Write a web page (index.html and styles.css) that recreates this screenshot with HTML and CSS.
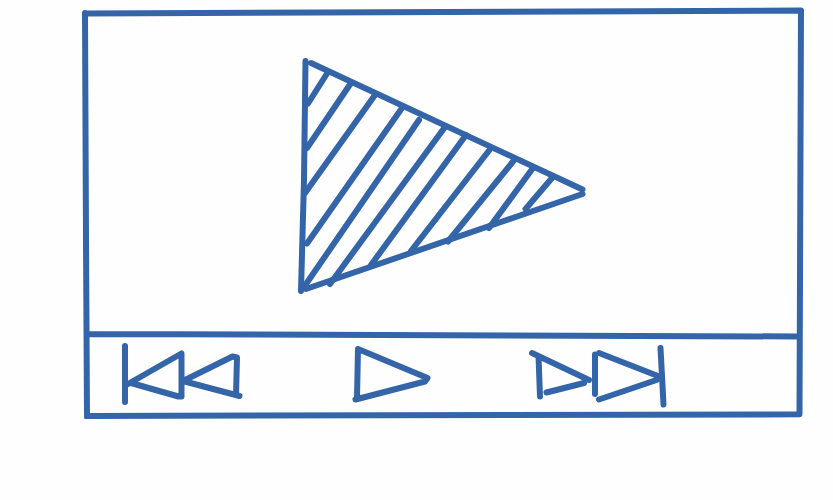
FILE: index.html
```html
<!DOCTYPE html>
<html lang="en">
<head>
<meta charset="utf-8">
<meta name="viewport" content="width=device-width, initial-scale=1">
<title>Video player</title>
<link rel="stylesheet" href="styles.css">
</head>
<body>
<main class="player">
  <!-- Hand-drawn outline that stretches with the player -->
  <svg class="frame" viewBox="82 7 722 412" preserveAspectRatio="none" aria-hidden="true">
    <path d="M85 13V13.500L801 10.500M801 10.500L799.500 413M799.500 414.300L87 416M87 417L86 240L85 13M88 334L798 336.500"/>
  </svg>
  <section class="screen">
    <button class="button" type="button" aria-label="Play video">
      <svg width="292" height="248" viewBox="297 47 292 248" aria-hidden="true">
        <path d="M305.500 61L304 180L301 291M311 63L582.500 189.500M582.500 194L306 289"/>
        <path d="M328 72L308 103.500M351 83L307 148M375 95L305 193M402 108L307 243.500M419 120L304 287M445 127L330 284M466 135L371 265M491 148L411 251M515 159L448 241.500M533 168L489 228M552 178L525.500 209"/>
      </svg>
    </button>
  </section>
  <nav class="controls" aria-label="Playback">
    <button class="button" type="button" aria-label="Previous">
      <svg width="134" height="68" viewBox="122 343 134 68" aria-hidden="true">
        <path d="M125 346V402M128 384L181.500 353.500L181.500 396.500L178.500 396.500L131 383M236 395L237 357.500L232.500 356.500L183 381L239.500 396"/>
      </svg>
    </button>
    <button class="button" type="button" aria-label="Play">
      <svg width="78" height="68" viewBox="353 343 78 68" aria-hidden="true">
        <path d="M357 398L358 349L427.500 378L425 381.500L355.500 399.500"/>
      </svg>
    </button>
    <button class="button" type="button" aria-label="Next">
      <svg width="139" height="68" viewBox="528 343 139 68" aria-hidden="true">
        <path d="M532 353L589 380M538.500 356L540 396.500M546.500 392.500L584 383M595 354.500L595 394M599 353L658 376M656.500 380L599 399.500M660.500 348L663.500 404.500"/>
      </svg>
    </button>
  </nav>
</main>
</body>
</html>
```
FILE: styles.css
```css
body {
  margin: 0;
  background: #fefefe;
  font-family: "Liberation Sans", sans-serif;
}

.player {
  position: relative;
  margin: 7px 29px 0 82px;
}

.frame {
  position: absolute;
  inset: 0;
  width: 100%;
  height: 100%;
  pointer-events: none;
}

svg {
  display: block;
  overflow: visible;
  fill: none;
  stroke: #3465a8;
  stroke-width: 6px;
  stroke-linecap: round;
  stroke-linejoin: round;
}

.screen {
  display: flex;
  justify-content: center;
  padding: 40px;
}

.controls {
  display: flex;
  justify-content: space-between;
  padding: 8px 137px 8px 40px;
}

.button {
  padding: 0;
  border: 0;
  background: none;
  cursor: pointer;
}
```
